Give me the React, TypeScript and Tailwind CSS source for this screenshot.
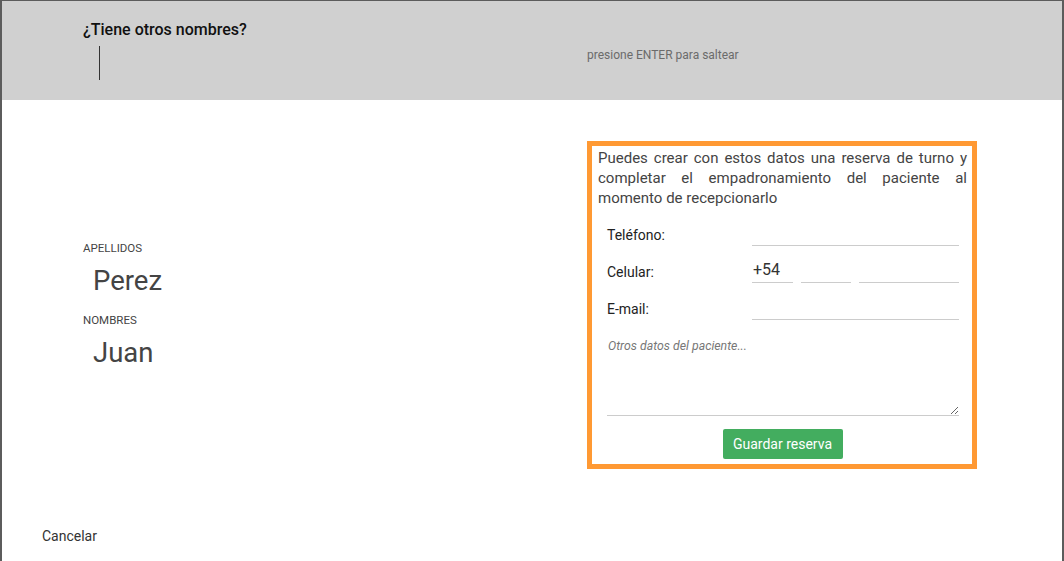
import React from "react";

export default function App() {
  return (
    <div
      className="w-[1064px] h-[561px] overflow-hidden bg-white border-t border-l-2 border-r-2 border-[#5c5c5c] text-[#333]"
      style={{ fontFamily: "Roboto, 'Liberation Sans', Arial, sans-serif" }}
    >
      {/* Header */}
      <div className="h-[99px] bg-[#d0d0d0] flex">
        <div className="w-[585px] pl-[81px] pt-[20px]">
          <div className="text-[16px] leading-[18px] font-medium text-[#111]">¿Tiene otros nombres?</div>
          <div className="ml-[16px] mt-[7px] w-px h-[34px] bg-[#333]" />
        </div>
        <div className="pt-[46px] text-[12px] leading-[16px] text-[#6b6b6b]">presione ENTER para saltear</div>
      </div>

      {/* Body */}
      <div className="flex pt-[41px]">
        <div className="w-[585px] pl-[81px] pt-[100px] flex flex-col">
          <div className="text-[11.5px] leading-[14px] uppercase text-[#444]">Apellidos</div>
          <div className="mt-[11px] pl-[10px] text-[27.5px] leading-[30px] text-[#444]">Perez</div>
          <div className="mt-[17px] text-[11.5px] leading-[14px] uppercase text-[#444]">Nombres</div>
          <div className="mt-[11px] pl-[10px] text-[27.5px] leading-[30px] text-[#444]">Juan</div>
        </div>

        <div className="w-[390px] border-[5px] border-[#ff9933] pt-[2px] pb-[5px] pl-[6px] pr-[5px]">
          <p className="text-[15px] leading-[20px] text-[#444] text-justify">
            Puedes crear con estos datos una reserva de turno y completar el empadronamiento del paciente al momento de recepcionarlo
          </p>
          <div className="mt-[14px] pl-[9px] pr-[8px] flex flex-col gap-[13px]">
            <div className="flex items-center h-[24px]">
              <span className="w-[145px] text-[14px] leading-[20px] pt-[2px] text-[#222]">Teléfono:</span>
              <div className="flex-1 h-[24px] border-b border-[#cccccc]" />
            </div>
            <div className="flex items-center h-[24px]">
              <span className="w-[145px] text-[14px] leading-[20px] pt-[2px] text-[#222]">Celular:</span>
              <div className="w-[41px] h-[24px] border-b border-[#cccccc] text-[16px] leading-[22px] text-[#333] pl-px">+54</div>
              <div className="ml-[8px] w-[50px] h-[24px] border-b border-[#cccccc]" />
              <div className="ml-[8px] flex-1 h-[24px] border-b border-[#cccccc]" />
            </div>
            <div className="flex items-center h-[24px]">
              <span className="w-[145px] text-[14px] leading-[20px] pt-[2px] text-[#222]">E-mail:</span>
              <div className="flex-1 h-[24px] border-b border-[#cccccc]" />
            </div>
          </div>
          <div className="pl-[9px] pr-[8px]">
            <textarea
              className="mt-[18px] block w-full h-[78px] p-0 pl-px border-0 border-b border-[#cccccc] text-[12.3px] leading-[16px] outline-none placeholder:italic placeholder:text-[#777]"
              placeholder="Otros datos del paciente..."
            />
          </div>
          <div className="mt-[13px] flex justify-center">
            <button className="w-[120px] h-[30px] rounded-[2px] bg-[#43ad5f] text-white text-[14px]">Guardar reserva</button>
          </div>
        </div>
      </div>

      {/* Footer */}
      <div className="mt-[57px] pl-[40px] text-[14px] leading-[20px] text-[#333]">Cancelar</div>
    </div>
  );
}
